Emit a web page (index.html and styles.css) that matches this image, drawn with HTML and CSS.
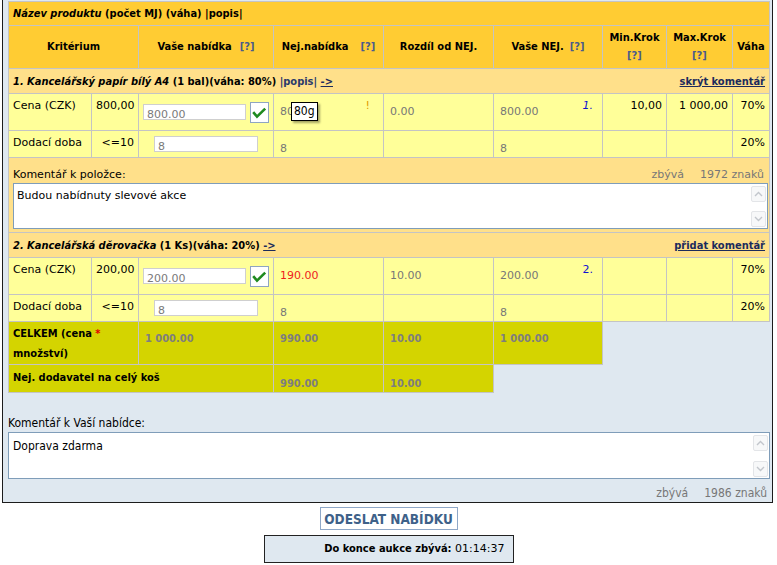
FILE: index.html
```html
<!DOCTYPE html>
<html lang="cs">
<head>
<meta charset="utf-8">
<title>Nabídka</title>
<link rel="stylesheet" href="styles.css">
</head>
<body>
<div class="frame">
  <table class="grid">
    <colgroup>
      <col class="c1"><col class="c2"><col class="c3"><col class="c4"><col class="c5"><col class="c6"><col class="c7"><col class="c8"><col class="c9">
    </colgroup>
    <tr class="r-prod">
      <td colspan="9"><i>Název produktu</i> (počet MJ) (váha) |popis|</td>
    </tr>
    <tr class="r-head">
      <th colspan="2">Kritérium</th>
      <th>Vaše nabídka<span class="q">[?]</span></th>
      <th>Nej.nabídka<span class="q q-wide">[?]</span></th>
      <th>Rozdíl od NEJ.</th>
      <th>Vaše NEJ.<span class="q q-tight">[?]</span></th>
      <th>Min.Krok<br><span class="q q-line">[?]</span></th>
      <th>Max.Krok<br><span class="q q-line">[?]</span></th>
      <th>Váha</th>
    </tr>
    <tr class="r-item">
      <td colspan="9">
        <div class="item-bar">
          <span><i>1. Kancelářský papír bílý A4</i> (1 bal)(váha: 80%) <span class="popis">|popis|</span> <span class="arrow">-&gt;</span></span>
          <span class="toggle">skrýt komentář</span>
        </div>
      </td>
    </tr>
    <tr class="r-price">
      <td class="lbl">Cena (CZK)</td>
      <td class="num n2">800,00</td>
      <td class="bid">
        <div class="bid-box">
          <span class="inp">800.00</span>
          <span class="ok"><svg width="17" height="19" viewBox="0 0 17 19"><path d="M2.2 9.2 L6 13.6 L14.2 5.6" fill="none" stroke="#1f8a1f" stroke-width="2.6"/></svg></span>
        </div>
      </td>
      <td class="val"><span class="flag">!</span><div class="v tip-host">800.00<span class="tip">80g</span></div></td>
      <td class="val"><div class="v">0.00</div></td>
      <td class="val"><span class="rank">1.</span><div class="v">800.00</div></td>
      <td class="num">10,00</td>
      <td class="num">1 000,00</td>
      <td class="num">70%</td>
    </tr>
    <tr class="r-deliv">
      <td class="lbl">Dodací doba</td>
      <td class="num n2">&lt;=10</td>
      <td class="bid"><span class="inp inp-short">8</span></td>
      <td class="val"><div class="v">8</div></td>
      <td class="val"></td>
      <td class="val"><div class="v">8</div></td>
      <td class="num"></td>
      <td class="num"></td>
      <td class="num">20%</td>
    </tr>
    <tr class="r-comment">
      <td colspan="9">
        <div class="cm-top">
          <span>Komentář k položce:</span>
          <span class="count">zbývá<span class="gap"></span>1972 znaků</span>
        </div>
        <div class="ta">Budou nabídnuty slevové akce
          <div class="sb">
            <span class="sb-btn"><svg width="9" height="6" viewBox="0 0 9 6"><path d="M1 5 L4.5 1.5 L8 5" fill="none" stroke="#c2c6cc" stroke-width="1.4"/></svg></span>
            <span class="sb-btn"><svg width="9" height="6" viewBox="0 0 9 6"><path d="M1 1 L4.5 4.5 L8 1" fill="none" stroke="#c2c6cc" stroke-width="1.4"/></svg></span>
          </div>
        </div>
      </td>
    </tr>
    <tr class="r-item r-item2">
      <td colspan="9">
        <div class="item-bar">
          <span><i>2. Kancelářská děrovačka</i> (1 Ks)(váha: 20%) <span class="arrow">-&gt;</span></span>
          <span class="toggle">přidat komentář</span>
        </div>
      </td>
    </tr>
    <tr class="r-price">
      <td class="lbl">Cena (CZK)</td>
      <td class="num n2">200,00</td>
      <td class="bid">
        <div class="bid-box">
          <span class="inp">200.00</span>
          <span class="ok"><svg width="17" height="19" viewBox="0 0 17 19"><path d="M2.2 9.2 L6 13.6 L14.2 5.6" fill="none" stroke="#1f8a1f" stroke-width="2.6"/></svg></span>
        </div>
      </td>
      <td class="val"><div class="v red">190.00</div></td>
      <td class="val"><div class="v">10.00</div></td>
      <td class="val"><span class="rank rank2">2.</span><div class="v">200.00</div></td>
      <td class="num"></td>
      <td class="num"></td>
      <td class="num">70%</td>
    </tr>
    <tr class="r-deliv">
      <td class="lbl">Dodací doba</td>
      <td class="num n2">&lt;=10</td>
      <td class="bid"><span class="inp inp-short">8</span></td>
      <td class="val"><div class="v">8</div></td>
      <td class="val"></td>
      <td class="val"><div class="v">8</div></td>
      <td class="num"></td>
      <td class="num"></td>
      <td class="num">20%</td>
    </tr>
    <tr class="r-total">
      <td colspan="2" class="t-lbl">CELKEM (cena <span class="star">*</span> množství)</td>
      <td class="t-val">1 000.00</td>
      <td class="t-val">990.00</td>
      <td class="t-val">10.00</td>
      <td class="t-val">1 000.00</td>
      <td colspan="3" class="void"></td>
    </tr>
    <tr class="r-best">
      <td colspan="3" class="t-lbl">Nej. dodavatel na celý koš</td>
      <td class="t-val">990.00</td>
      <td class="t-val">10.00</td>
      <td colspan="4" class="void"></td>
    </tr>
  </table>

  <div class="note-label">Komentář k Vaší nabídce:</div>
  <div class="ta ta-main">Doprava zdarma
    <div class="sb">
      <span class="sb-btn"><svg width="9" height="6" viewBox="0 0 9 6"><path d="M1 5 L4.5 1.5 L8 5" fill="none" stroke="#c2c6cc" stroke-width="1.4"/></svg></span>
      <span class="sb-btn"><svg width="9" height="6" viewBox="0 0 9 6"><path d="M1 1 L4.5 4.5 L8 1" fill="none" stroke="#c2c6cc" stroke-width="1.4"/></svg></span>
    </div>
  </div>
  <div class="note-count">zbývá<span class="gap"></span>1986 znaků</div>
</div>

<div class="actions">
  <button class="send" type="button">ODESLAT NABÍDKU</button>
  <div class="timer"><b>Do konce aukce zbývá:</b> 01:14:37</div>
</div>
</body>
</html>
```

FILE: styles.css
```css
* { box-sizing: border-box; }

body {
  margin: 0;
  background: #fff;
  color: #000;
  font-family: "DejaVu Sans", Verdana, sans-serif;
  font-size: 11px;
}

.frame {
  margin-left: 2px;
  width: 771px;
  border: 1px solid #1c1c1c;
  border-top: none;
  background: #dfe8f0;
  padding: 1px 2px 2px 5px;
}

.grid {
  border-collapse: collapse;
  table-layout: fixed;
  width: 762px;
}
.c1 { width: 83px; }
.c2 { width: 47px; }
.c3 { width: 135px; }
.c4 { width: 110px; }
.c5 { width: 110px; }
.c6 { width: 109px; }
.c7 { width: 64px; }
.c8 { width: 66px; }
.c9 { width: 37px; }

.grid td, .grid th {
  border: 1px solid #c4c4c4;
  padding: 5px 4px 0;
  vertical-align: top;
  white-space: nowrap;
}

.r-prod td, .r-head th, .r-item td, .t-lbl, .t-val, .timer b, .send {
  font-family: "DejaVu Sans Condensed", "DejaVu Sans", sans-serif;
  font-stretch: condensed;
  font-weight: bold;
}

.r-prod { height: 24px; }
.r-prod td {
  background: #ffcc33;
  vertical-align: middle;
  padding: 0 4px;
}

.r-head { height: 43px; }
.r-head th {
  background: #ffcc33;
  text-align: center;
  vertical-align: middle;
  line-height: 18px;
  padding: 0 2px;
}
.q { color: #4a5a8c; margin-left: 8px; }
.q-wide { margin-left: 12px; }
.q-tight { margin-left: 6px; }
.q-line { margin-left: 0; }

.r-item { height: 25px; }
.r-item td {
  background: #ffe08a;
  vertical-align: middle;
  padding: 0 4px;
}
.item-bar {
  display: flex;
  justify-content: space-between;
  align-items: center;
}
.popis { color: #2b3a6b; }
.arrow, .toggle { color: #1c2b5c; text-decoration: underline; }

.r-price { height: 37px; }
.r-deliv { height: 27px; }
.r-price td, .r-deliv td { background: #ffff99; }

.num { text-align: right; }
.n2 { padding-right: 3px; }

.bid { vertical-align: middle !important; padding: 0 4px !important; }
.bid-box { display: flex; align-items: center; gap: 4px; }
.inp {
  display: block;
  width: 104px;
  height: 16px;
  background: #fff;
  border: 1px solid #cfcfcf;
  color: #7a7a7a;
  line-height: 14px;
  padding: 3px 0 0 3px;
  overflow: hidden;
}
.inp-short { margin-left: 11px; }
.ok {
  display: flex;
  width: 19px;
  height: 21px;
  background: #fff;
  border: 1px solid #8fa5c2;
  align-items: center;
  justify-content: center;
}

.val { padding-left: 6px !important; color: #777; }
.v { margin-top: 6px; }
.red { color: #ee1c1c; }
.flag { float: right; color: #e09a00; margin-right: 9px; }
.rank { float: right; color: #1010d0; font-style: italic; margin-right: 5px; }
.rank2 { font-style: normal; }

.tip-host { position: relative; }
.tip {
  position: absolute;
  left: 11px;
  top: -3px;
  height: 19px;
  padding: 0 2px;
  background: #fff;
  border: 1px solid #000;
  color: #000;
  font-family: "DejaVu Sans Condensed", "DejaVu Sans", sans-serif;
  font-stretch: condensed;
  font-size: 12px;
  line-height: 17px;
  box-shadow: 2px 2px 2px rgba(0, 0, 0, 0.35);
}

.r-comment { height: 75px; }
.r-comment td {
  background: #ffe08a;
  padding: 10px 1px 2px 4px;
}
.cm-top {
  display: flex;
  justify-content: space-between;
  padding-right: 4px;
}
.count { color: #777; }
.gap { display: inline-block; width: 16px; }

.ta {
  position: relative;
  margin-top: 2px;
  height: 46px;
  background: #fff;
  border: 1px solid #7f9db9;
  padding: 5px 3px;
  white-space: normal;
}
.sb {
  position: absolute;
  top: 2px;
  right: 1px;
  bottom: 1px;
  width: 15px;
  display: flex;
  flex-direction: column;
  justify-content: space-between;
}
.sb-btn {
  display: flex;
  height: 16px;
  align-items: center;
  justify-content: center;
  border: 1px solid #e3e5e8;
  border-radius: 2px;
  background: #f7f8f9;
}

.r-total { height: 43px; }
.r-best { height: 28px; }
.r-total td, .r-best td { background: #d4d400; }
.t-lbl { padding-top: 2px !important; line-height: 20px; white-space: normal !important; }
.r-best .t-lbl { padding-top: 3px !important; }
.t-val { color: #7e7e7e; padding-top: 10px !important; padding-left: 6px !important; }
.r-best .t-val { padding-top: 12px !important; }
.star { color: #e00000; }
.grid td.void {
  background: transparent;
  border-right-style: hidden;
  border-bottom-style: hidden;
}

.note-label {
  margin-top: 23px;
  font-family: "DejaVu Sans Condensed", "DejaVu Sans", sans-serif;
  font-stretch: condensed;
  font-size: 12px;
  line-height: 14px;
}
.ta-main {
  margin-top: 2px;
  width: 762px;
  height: 47px;
  font-family: "DejaVu Sans Condensed", "DejaVu Sans", sans-serif;
  font-stretch: condensed;
  font-size: 12px;
  padding: 6px 4px;
}
.note-count {
  margin-top: 7px;
  text-align: right;
  padding-right: 3px;
  color: #777;
  font-family: "DejaVu Sans Condensed", "DejaVu Sans", sans-serif;
  font-stretch: condensed;
  font-size: 12px;
  line-height: 14px;
}

.actions {
  display: flex;
  flex-direction: column;
  align-items: center;
  padding-top: 4px;
}
.send {
  width: 138px;
  height: 23px;
  padding: 0;
  background: #fff;
  border: 1px solid #8fa8c8;
  color: #3e6189;
  font-size: 13.5px;
  cursor: pointer;
}
.timer {
  margin-top: 5px;
  width: 250px;
  height: 28px;
  border: 1px solid #222;
  background: #dfe8f0;
  text-align: right;
  padding: 6px 8px 0 0;
  line-height: 13px;
}
```
